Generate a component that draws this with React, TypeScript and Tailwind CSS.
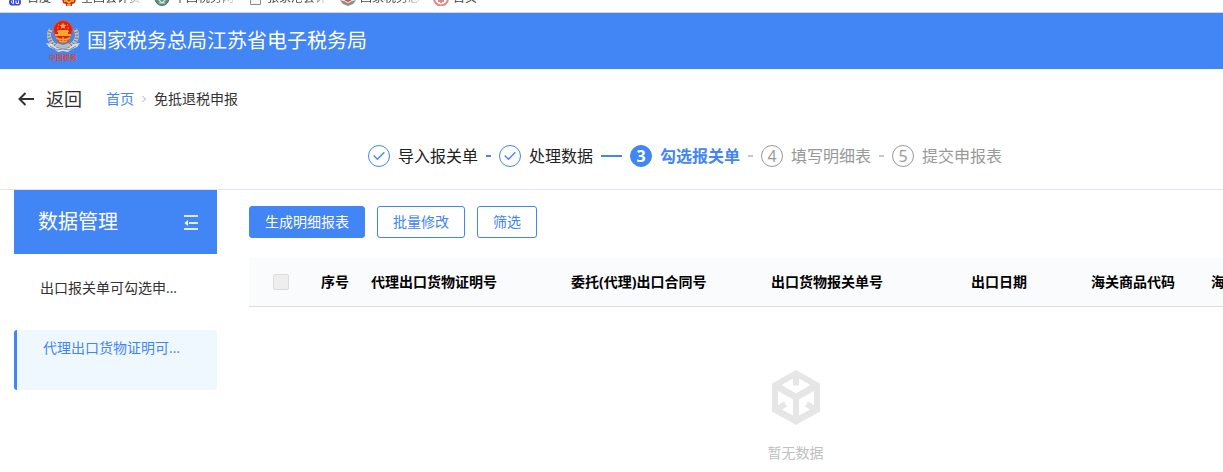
import type { ReactNode } from "react";
import { clsx } from "clsx";

interface Bookmark {
  label: string;
  icon: ReactNode;
  faded?: boolean;
}

const bookmarks: Bookmark[] = [
  {
    label: "百度",
    icon: (
      <>
        <path d="M3 9c-2 3-1 7 3 6.500h4c4 .5 5-3.500 3-6.500z" fill="#3a48dc" />
        <path d="M5 10.500c-1 1-.5 3 1.500 3V10M9 10.500v3h2.500v-3" stroke="#fff" strokeWidth="1" fill="none" />
      </>
    ),
  },
  {
    label: "全国会计资",
    faded: true,
    icon: (
      <>
        <path d="M1 9h14l-1 4-3 1v2H5v-2l-3-1z" fill="#d3261c" />
        <path d="M3 11h3l2 2 2-2h3M6 15h4" stroke="#f5c53a" strokeWidth="1.500" fill="none" />
      </>
    ),
  },
  {
    label: "中国税务网",
    faded: true,
    icon: (
      <>
        <circle cx="8" cy="8.500" r="7" fill="#5d8f83" stroke="#516a70" strokeWidth="1" />
        <path d="M4 9l4 4 4-4M5 13h6" stroke="#d7e8df" strokeWidth="1.200" fill="none" />
      </>
    ),
  },
  {
    label: "张家港会计",
    faded: true,
    icon: <path d="M3.500 2v12.500h10V2z" fill="#f7f7f7" stroke="#8d8d8d" />,
  },
  {
    label: "国家税务总",
    faded: true,
    icon: (
      <>
        <path d="M0 10l4 1 4 2 4-2 4-1-3 4-5 2-5-2z" fill="#918a85" />
        <circle cx="8" cy="8" r="4" fill="#b9644f" />
        <path d="M5 11l3 2 3-2" stroke="#ddd" fill="none" />
      </>
    ),
  },
  {
    label: "首页",
    icon: (
      <>
        <circle cx="8" cy="8.500" r="7" fill="#fff" stroke="#e0888b" strokeWidth="2" />
        <path d="M8 4v9M5 11h6" stroke="#e0888b" strokeWidth="2" />
      </>
    ),
  },
];

type StepStatus = "done" | "active" | "todo";

const steps: { title: string; status: StepStatus }[] = [
  { title: "导入报关单", status: "done" },
  { title: "处理数据", status: "done" },
  { title: "勾选报关单", status: "active" },
  { title: "填写明细表", status: "todo" },
  { title: "提交申报表", status: "todo" },
];

const columns = [
  { title: "序号", width: "w-[50px]" },
  { title: "代理出口货物证明号", width: "w-[200px]" },
  { title: "委托(代理)出口合同号", width: "w-[200px]" },
  { title: "出口货物报关单号", width: "w-[200px]" },
  { title: "出口日期", width: "w-[120px]" },
  { title: "海关商品代码", width: "w-[120px]" },
  { title: "海关商品名称", width: "w-[140px]" },
];

const menu = [
  { title: "出口报关单可勾选申...", active: false },
  { title: "代理出口货物证明可...", active: true },
];

const BookmarkBar = () => (
  <nav className="flex h-[13px] items-end gap-[10px] overflow-hidden border-b border-[#d6d6d6] bg-white pl-[7px]">
    {bookmarks.map((item) => (
      <a key={item.label} href="#" className="flex items-center gap-1 pb-[6px] text-xs leading-4 text-[#444]">
        <svg width="16" height="16" viewBox="0 0 16 16" aria-hidden="true">
          {item.icon}
        </svg>
        <span
          className={clsx(
            "whitespace-nowrap",
            item.faded && "w-[63px] overflow-hidden [mask-image:linear-gradient(to_right,#000_65%,transparent)]"
          )}
        >
          {item.label}
        </span>
      </a>
    ))}
  </nav>
);

const Emblem = () => (
  <svg width="34" height="44" viewBox="0 0 34 44" aria-hidden="true">
    <path d="M5 10C1 16 3 24 12 28M29 10c4 6 2 14-7 18" fill="none" stroke="#c3c2be" strokeWidth="4" />
    <path d="M5 10C1 16 3 24 12 28M29 10c4 6 2 14-7 18" fill="none" stroke="#66707f" strokeWidth="3" strokeDasharray="1 2" />
    <path d="M0 24l6 1 5 4 6 1 6-1 5-4 6-1-3 4-5 2-4 3-5-1-5 1-4-3-5-2z" fill="#dcdde0" />
    <path d="M11 24l6 2 6-2v4l-6 2-6-2z" fill="#b9bbc2" />
    <path d="M4 27l7 4 6-1 6 1 7-4" fill="none" stroke="#858b98" strokeWidth="1" />
    <path d="M9 18h16l-3 6h-10z" fill="#d8551f" />
    <circle cx="17" cy="11" r="9.500" fill="#e01f18" stroke="#dd5a28" strokeWidth="1" />
    <path d="M17 3.500l1 2.200 2.400.2-1.800 1.500.6 2.300-2.200-1.200-2.200 1.200.6-2.300-1.800-1.500 2.400-.2z" fill="#ffb12e" />
    <path d="M11 9h1.500M21.500 9H23M12 6h1M21 6h1" stroke="#ffb12e" strokeWidth="1.200" />
    <path d="M12 11h10l1 2h-1v2h3v2H9v-2h3v-2h-1z" fill="#f8a52d" />
    <path d="M10 19c4 2 10 2 14 0M17 18v5M13 22c2 1 6 1 8 0" fill="none" stroke="#f8a52d" strokeWidth="1.400" />
    <text x="17" y="41" textAnchor="middle" fontSize="7" fontWeight="700" fill="#d8483f">
      中国税务
    </text>
  </svg>
);

const StepIcon = ({ status, index }: { status: StepStatus; index: number }) => (
  <span
    className={clsx(
      "flex size-[22px] shrink-0 items-center justify-center rounded-full border text-base leading-5",
      status === "done" && "border-[#4285f4] text-[#4285f4]",
      status === "active" && "border-[#4285f4] bg-[#4285f4] font-bold text-white",
      status === "todo" && "border-[#999] text-[#999]"
    )}
  >
    {status === "done" ? (
      <svg width="12" height="10" viewBox="0 0 12 10" fill="none" stroke="currentColor" strokeWidth="1.300" aria-hidden="true">
        <path d="M.7 4.500l3.800 3.800L11.300 1.200" />
      </svg>
    ) : (
      index
    )}
  </span>
);

const Steps = () => (
  <ol className="flex h-[61px] justify-center border-b border-[#e4e4ee] pt-4">
    {steps.map((step, i) => {
      const last = i === steps.length - 1;
      return (
        <li key={step.title} className={clsx("flex h-[22px] items-center gap-2", !last && "w-[131px] pr-2")}>
          <StepIcon status={step.status} index={i + 1} />
          <span
            className={clsx(
              "text-base leading-6 whitespace-nowrap",
              step.status === "done" && "text-[#222]",
              step.status === "active" && "font-bold text-[#4285f4]",
              step.status === "todo" && "text-[#999]"
            )}
          >
            {step.title}
          </span>
          {!last && <span className={clsx("h-[2px] flex-1", step.status === "done" ? "bg-[#4285f4]" : "bg-[#c8c8c8]")} />}
        </li>
      );
    })}
  </ol>
);

const Sidebar = () => (
  <aside className="w-[203px] shrink-0">
    <div className="flex h-16 items-center justify-between bg-[#4285f4] pr-[18px] pl-6 text-white">
      <h2 className="text-xl">数据管理</h2>
      <button type="button" aria-label="收起">
        <svg width="16" height="16" viewBox="0 0 16 16" fill="none" stroke="#dfe9fd" strokeWidth="2" aria-hidden="true">
          <path d="M1 2h14M6 9h9M1 15h14" />
          <path d="M1.500 9L5 6v6z" fill="#fff" stroke="none" />
        </svg>
      </button>
    </div>
    <ul className="mt-4">
      {menu.map((item) => (
        <li key={item.title}>
          <a
            href="#"
            className={clsx(
              "block h-[60px] pl-[26px] text-sm leading-9 whitespace-nowrap",
              item.active ? "rounded-[3px] border-l-3 border-[#4285f4] bg-[#f0f8ff] text-[#4285f4]" : "text-[#333]"
            )}
          >
            {item.title}
          </a>
        </li>
      ))}
    </ul>
  </aside>
);

const Empty = () => (
  <div className="flex flex-col items-center pt-[63px] text-sm text-[#c0c0c0]">
    <svg width="48" height="55" viewBox="0 0 48 55" aria-hidden="true">
      <path d="M24 0l24 13.500v28L24 55 0 41.500v-28z" fill="#e6e6e6" />
      <path d="M21 8.500v7h6v-7L38.500 15 24 23.500 9.500 15z" fill="#fff" />
      <path d="M6 21l15 8.500v16L10 39.500l5-3-3-5-6 3.500z" fill="#fff" />
      <path d="M42 21l-15 8.500v16L38 39.500l-5-3 3-5 6 3.500z" fill="#fff" />
    </svg>
    <p className="mt-[18px] leading-5">暂无数据</p>
  </div>
);

export default function App() {
  return (
    <div className="w-full overflow-hidden bg-white [font-family:'Open_Sans','Noto_Sans_CJK_SC',sans-serif]">
      <div className="min-w-[1370px]">
        <BookmarkBar />
        <header className="flex h-14 items-center gap-[7px] bg-[#4285f4] pl-[46px] text-white">
          <Emblem />
          <h1 className="text-xl">国家税务总局江苏省电子税务局</h1>
        </header>

        <div className="flex h-[60px] items-center pl-[18px]">
          <button type="button" className="flex items-center gap-3 text-lg text-[#333]">
            <svg width="16" height="14" viewBox="0 0 16 14" fill="none" stroke="#333" strokeWidth="2" aria-hidden="true">
              <path d="M7.500 1L1.500 7l6 6M1.500 7H16" />
            </svg>
            返回
          </button>
          <nav className="ml-6 flex items-center gap-2 text-sm text-[#333]">
            <a href="#" className="text-[#4285f4]">首页</a>
            <svg width="4" height="8" viewBox="0 0 4 8" fill="none" stroke="#aaa" aria-hidden="true">
              <path d="M.5 1l3 3-3 3" />
            </svg>
            <span>免抵退税申报</span>
          </nav>
        </div>

        <Steps />

        <div className="flex gap-8 pr-7 pl-[14px]">
          <Sidebar />
          <main className="min-w-0 flex-1 pt-4">
            <div className="flex gap-3 text-sm">
              <button type="button" className="h-8 rounded-[3px] border border-[#4285f4] bg-[#4285f4] px-[15px] text-white">
                生成明细报表
              </button>
              <button type="button" className="h-8 rounded-[3px] border border-[#4285f4] px-[15px] text-[#4285f4]">
                批量修改
              </button>
              <button type="button" className="h-8 rounded-[3px] border border-[#4285f4] px-[15px] text-[#4285f4]">
                筛选
              </button>
            </div>

            <div className="mt-5 overflow-hidden">
              <table className="w-[1094px] table-fixed text-left text-sm">
                <thead>
                  <tr className="h-12 border-b border-[#dcdee2] bg-[#fafbfd]">
                    <th className="w-16 pl-6">
                      <input
                        type="checkbox"
                        aria-label="全选"
                        disabled
                        className="block size-4 appearance-none rounded-xs border border-[#dcdcdc] bg-[#eee]"
                      />
                    </th>
                    {columns.map((col) => (
                      <th key={col.title} className={clsx("px-2 font-bold whitespace-nowrap text-black", col.width)}>
                        {col.title}
                      </th>
                    ))}
                  </tr>
                </thead>
              </table>
              <Empty />
            </div>
          </main>
        </div>
      </div>
    </div>
  );
}
